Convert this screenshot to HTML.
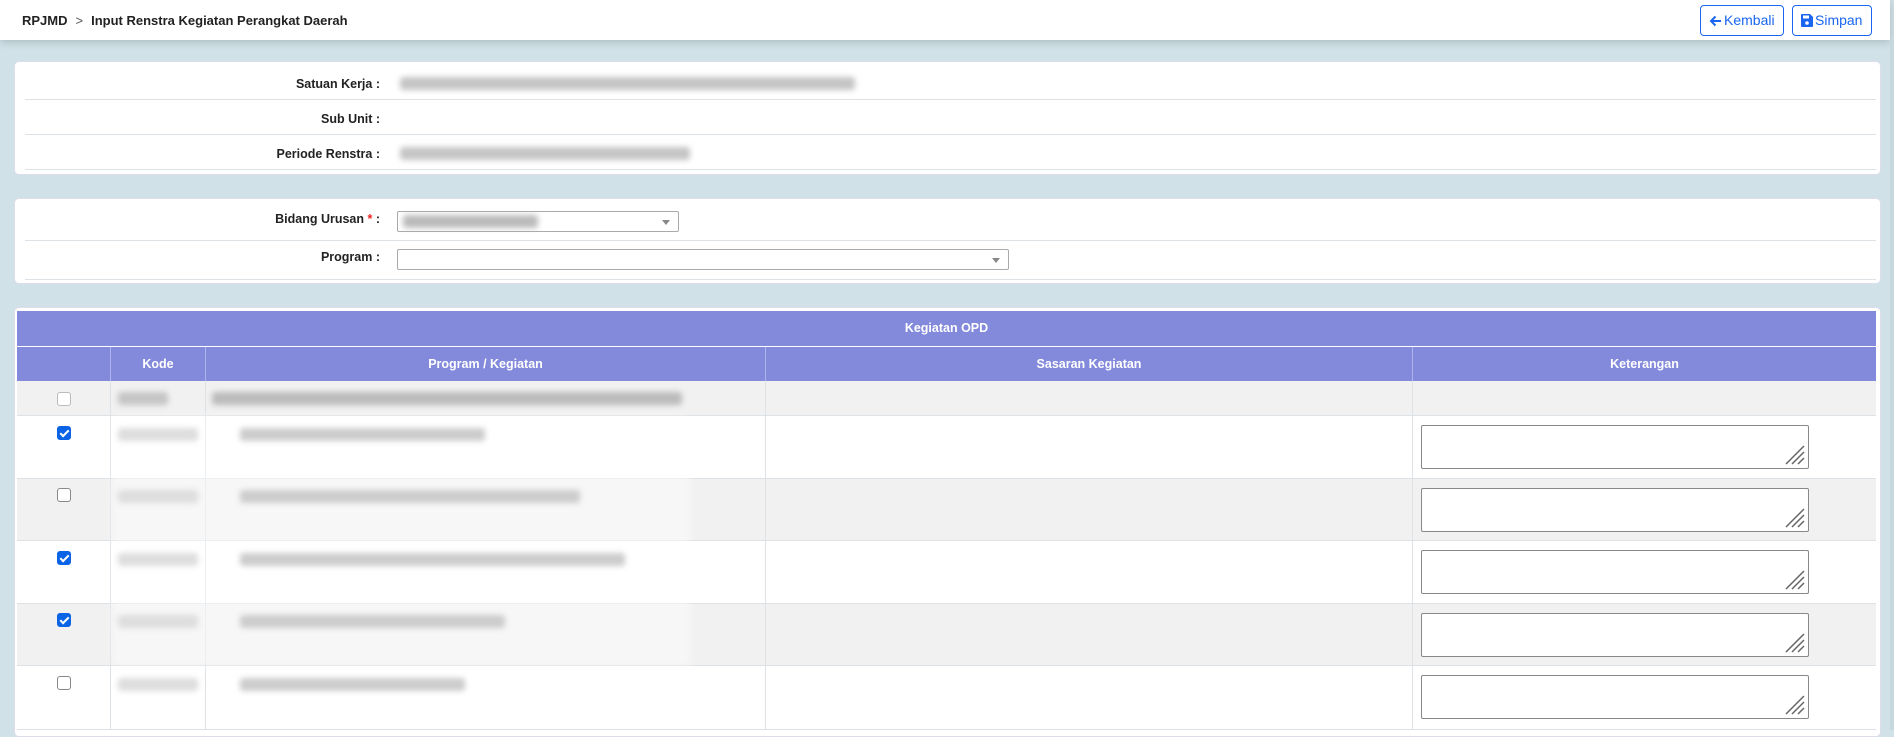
<!DOCTYPE html>
<html><head><meta charset="utf-8">
<style>
*{box-sizing:border-box;margin:0;padding:0}
body{width:1894px;height:730px;overflow:hidden;background:#d0e2e8;font-family:"Liberation Sans",Arial,sans-serif;font-size:12.5px;color:#222;position:relative}
.hdr{position:absolute;left:0;top:0;width:1890px;height:40px;background:#fff;box-shadow:0 2px 8px rgba(0,0,0,.18)}
.crumb{position:absolute;left:22px;top:13px;font-weight:bold;font-size:13px}
.crumb .gt{font-weight:normal;color:#555;margin:0 8px}
.btn{position:absolute;top:5px;height:31px;border:1px solid #1a66f0;border-radius:4px;color:#1a66f0;font-size:14px;line-height:29px;padding-left:8px;background:#fff;white-space:nowrap}
.btn svg{vertical-align:-2px;margin-right:2px}
.panel{position:absolute;left:14px;width:1867px;background:#fff;border:1px solid #dde;border-radius:5px}
.line{position:absolute;left:10px;right:4px;height:1px;background:#dde2e6}
.lbl{position:absolute;right:1500px;font-weight:bold;text-align:right;white-space:nowrap}
.blur{position:absolute;background:#c4c4c4;filter:blur(3px);height:13px;border-radius:3px}
.sel{position:absolute;border:1px solid #aaa;border-radius:2px;background:#fff;height:21px}
.sel:after{content:"";position:absolute;right:8px;top:8px;border:4px solid transparent;border-top:5px solid #888}
.th{position:absolute;background:#8389db;color:#fff;font-weight:bold;text-align:center}
.row{position:absolute;left:17px;width:1859px;border-bottom:1px solid #dde2e6}
.vl{position:absolute;width:1px;background:#dde2e6}
.cb{position:absolute;left:57px;width:14px;height:14px;border:1px solid #888;border-radius:3px;background:#fff}
.cb.on{background:#0b63e5;border-color:#0b63e5}
.cb.on:after{content:"";position:absolute;left:4px;top:1px;width:3px;height:7px;border:solid #fff;border-width:0 2px 2px 0;transform:rotate(45deg)}
.ta{position:absolute;left:1421px;width:388px;height:44px;border:1px solid #888;border-radius:2px;background:#fff}
.ta svg{position:absolute;right:2px;bottom:2px}
</style></head><body>
<div class="hdr">
<div class="crumb">RPJMD<span class="gt">&gt;</span>Input Renstra Kegiatan Perangkat Daerah</div>
<div class="btn" style="left:1700px;width:84px"><svg width="13" height="12" viewBox="0 0 13 12"><path d="M12 6H2M6.5 1.5L2 6l4.5 4.5" stroke="#1a66f0" stroke-width="2" fill="none"/></svg>Kembali</div>
<div class="btn" style="left:1792px;width:80px"><svg width="12" height="13" viewBox="0 0 12 13"><path d="M1 0h8l3 3v9a1 1 0 0 1-1 1H1a1 1 0 0 1-1-1V1a1 1 0 0 1 1-1z" fill="#1a66f0"/><rect x="2" y="1.5" width="6" height="3" fill="#fff"/><circle cx="6" cy="9" r="1.8" fill="#fff"/></svg>Simpan</div>
</div>
<div style="position:absolute;right:0;top:40px;width:4px;height:690px;background:#c5d8de"></div>

<div class="panel" style="top:61px;height:114px">
<div class="lbl" style="top:15px">Satuan Kerja :</div>
<div class="lbl" style="top:50px">Sub Unit :</div>
<div class="lbl" style="top:85px">Periode Renstra :</div>
<div class="line" style="top:37px"></div><div class="line" style="top:72px"></div><div class="line" style="top:107px"></div>
<div class="blur" style="left:385px;top:15px;width:455px"></div>
<div class="blur" style="left:385px;top:85px;width:290px"></div>
</div>

<div class="panel" style="top:198px;height:86px">
<div class="lbl" style="top:13px">Bidang Urusan <span style="color:#e22">*</span> :</div>
<div class="lbl" style="top:51px">Program :</div>
<div class="line" style="top:41px"></div><div class="line" style="top:80px"></div>
<div class="sel" style="left:382px;top:12px;width:282px"><div class="blur" style="left:5px;top:3px;width:135px;background:#bbb"></div></div>
<div class="sel" style="left:382px;top:50px;width:612px"></div>
</div>

<div class="panel" style="top:307px;height:430px"></div>
<div class="th" style="left:17px;top:311px;width:1859px;height:35px;line-height:35px">Kegiatan OPD</div>
<div class="th" style="left:17px;top:347px;width:1859px;height:34px;line-height:34px"></div>
<div class="th" style="left:110px;top:347px;width:95px;height:34px;line-height:34px;border-left:1px solid #b0b4ea">Kode</div>
<div class="th" style="left:205px;top:347px;width:560px;height:34px;line-height:34px;border-left:1px solid #b0b4ea">Program / Kegiatan</div>
<div class="th" style="left:765px;top:347px;width:647px;height:34px;line-height:34px;border-left:1px solid #b0b4ea">Sasaran Kegiatan</div>
<div class="th" style="left:1412px;top:347px;width:464px;height:34px;line-height:34px;border-left:1px solid #b0b4ea">Keterangan</div>

<div class="row" style="top:381px;height:35px;background:#f1f1f1"></div>
<div class="row" style="top:416px;height:63px;background:#fff"></div>
<div class="row" style="top:479px;height:62px;background:#f1f1f1"></div>
<div class="row" style="top:541px;height:63px;background:#fff"></div>
<div class="row" style="top:604px;height:62px;background:#f1f1f1"></div>
<div class="row" style="top:666px;height:64px;background:#fff"></div>
<div class="vl" style="left:110px;top:381px;height:349px"></div>
<div class="vl" style="left:205px;top:381px;height:349px"></div>
<div class="vl" style="left:765px;top:381px;height:349px"></div>
<div class="vl" style="left:1412px;top:381px;height:349px"></div>
<div style="position:absolute;left:112px;top:416px;width:578px;height:250px;background:rgba(255,255,255,.45);filter:blur(4px)"></div>

<div class="cb" style="top:392px;border-color:#bbb"></div>
<div class="cb on" style="top:426px"></div>
<div class="cb" style="top:488px"></div>
<div class="cb on" style="top:551px"></div>
<div class="cb on" style="top:613px"></div>
<div class="cb" style="top:676px"></div>

<div class="blur" style="left:118px;top:392px;width:50px"></div>
<div class="blur" style="left:212px;top:392px;width:470px;background:#bbb"></div>
<div class="blur" style="left:118px;top:428px;width:80px;background:#ddd"></div>
<div class="blur" style="left:240px;top:428px;width:245px;background:#ccc"></div>
<div class="blur" style="left:118px;top:490px;width:80px;background:#ddd"></div>
<div class="blur" style="left:240px;top:490px;width:340px;background:#ccc"></div>
<div class="blur" style="left:118px;top:553px;width:80px;background:#ddd"></div>
<div class="blur" style="left:240px;top:553px;width:385px;background:#ccc"></div>
<div class="blur" style="left:118px;top:615px;width:80px;background:#ddd"></div>
<div class="blur" style="left:240px;top:615px;width:265px;background:#ccc"></div>
<div class="blur" style="left:118px;top:678px;width:80px;background:#ddd"></div>
<div class="blur" style="left:240px;top:678px;width:225px;background:#ccc"></div>

<div class="ta" style="top:425px"><svg width="22" height="22" viewBox="0 0 22 22"><path d="M2 20L20 2M8 20L20 8M14 20L20 14" stroke="#666" stroke-width="1.5"/></svg></div>
<div class="ta" style="top:488px"><svg width="22" height="22" viewBox="0 0 22 22"><path d="M2 20L20 2M8 20L20 8M14 20L20 14" stroke="#666" stroke-width="1.5"/></svg></div>
<div class="ta" style="top:550px"><svg width="22" height="22" viewBox="0 0 22 22"><path d="M2 20L20 2M8 20L20 8M14 20L20 14" stroke="#666" stroke-width="1.5"/></svg></div>
<div class="ta" style="top:613px"><svg width="22" height="22" viewBox="0 0 22 22"><path d="M2 20L20 2M8 20L20 8M14 20L20 14" stroke="#666" stroke-width="1.5"/></svg></div>
<div class="ta" style="top:675px"><svg width="22" height="22" viewBox="0 0 22 22"><path d="M2 20L20 2M8 20L20 8M14 20L20 14" stroke="#666" stroke-width="1.5"/></svg></div>
</body></html>
